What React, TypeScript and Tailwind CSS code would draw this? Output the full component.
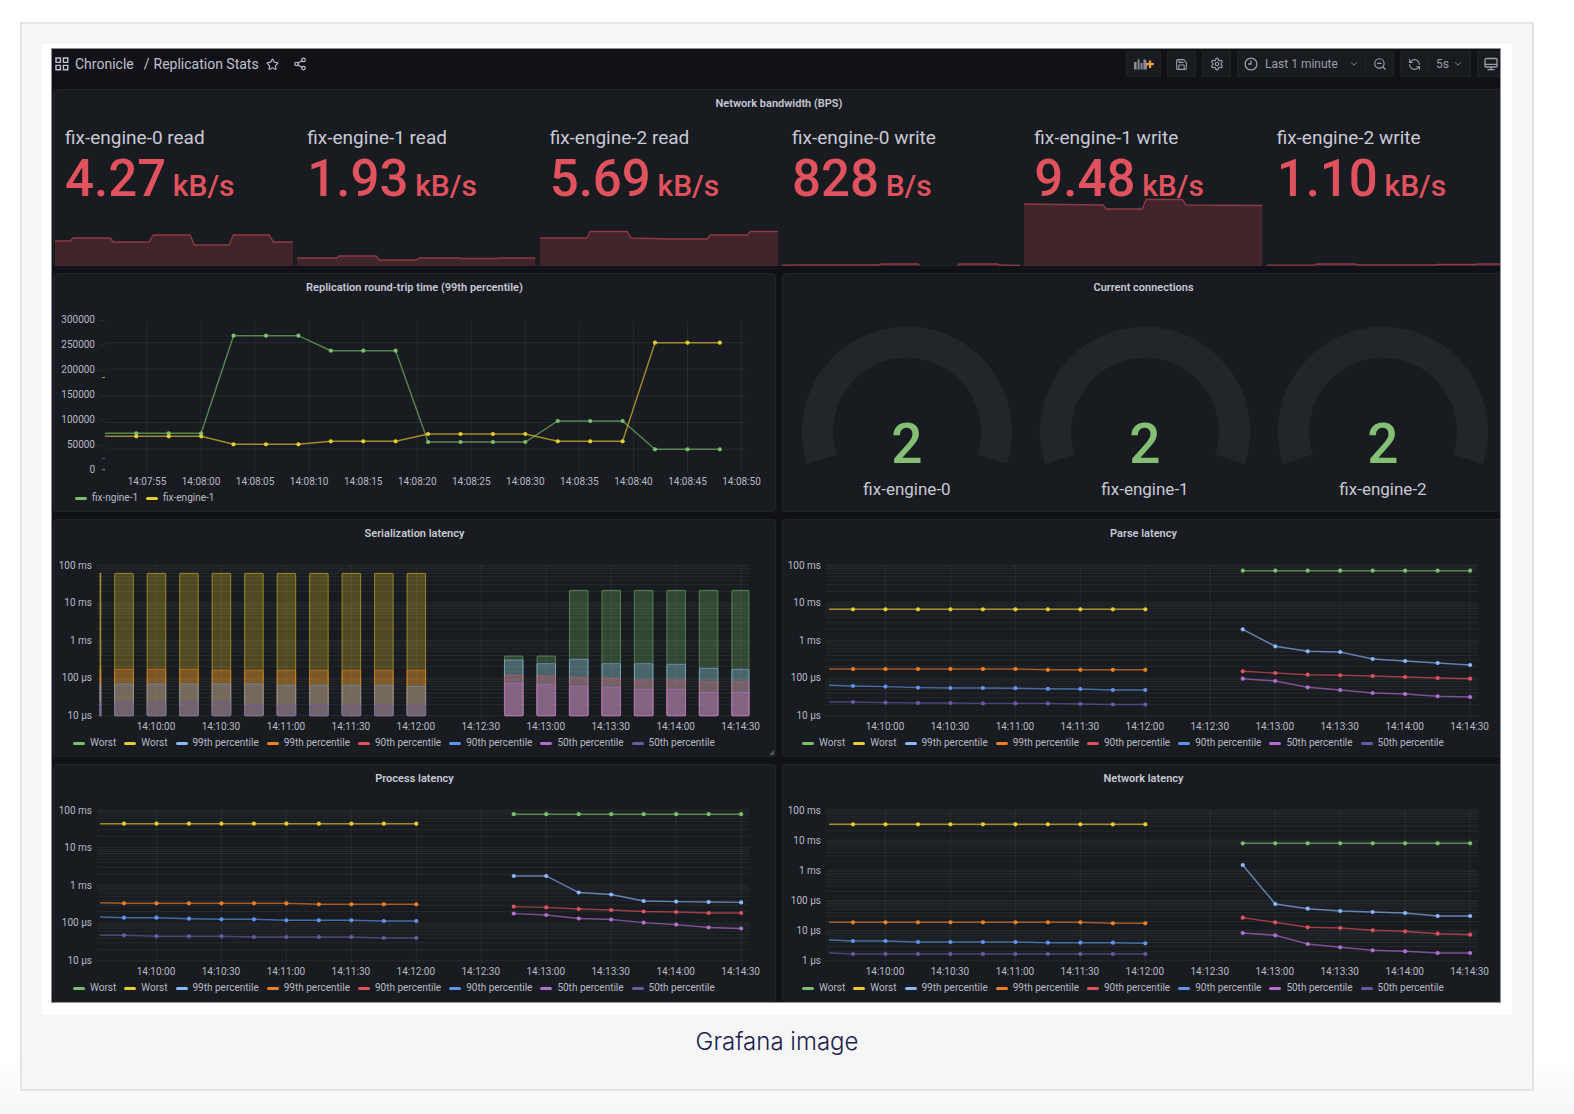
import type { ReactNode } from 'react'
import { ChevronDown, RefreshCcw, Save, Settings, Share2, Star, ZoomOut } from 'lucide-react'

const GREEN = '#7abf6d'
const YELLOW = '#e8cb30'
const LIGHT_BLUE = '#8ab8ff'
const ORANGE = '#f07f25'
const RED = '#e0525e'
const BLUE = '#5f95ee'
const PURPLE = '#b06fd0'
const DARK_PURPLE = '#6a5aa5'

const GRID = 'rgba(204,212,220,0.08)'

type Series = { color: string; side: 'left' | 'right'; ys: number[] }
type Point = [number, number]

const fill = (y: number, n: number) => Array.from({ length: n }, () => y)

// Sparkline vertices inside a 238x68 tile
const stats: { name: string; value: string; unit: string; line: Point[] }[] = [
  {
    name: 'fix-engine-0 read',
    value: '4.27',
    unit: 'kB/s',
    line: [[0, 43], [15, 43], [18, 40], [55, 40], [58, 44], [94, 44], [98, 37], [135, 37], [139, 47], [174, 47], [178, 37], [214, 37], [218, 44], [238, 44]],
  },
  {
    name: 'fix-engine-1 read',
    value: '1.93',
    unit: 'kB/s',
    line: [[0, 60], [40, 60], [42, 58], [79, 58], [82, 62], [119, 62], [122, 60], [162, 60], [164, 60.5], [200, 60.5], [202, 60], [238, 60]],
  },
  {
    name: 'fix-engine-2 read',
    value: '5.69',
    unit: 'kB/s',
    line: [[0, 40], [47, 40], [50, 33.5], [87, 33.5], [91, 40], [128, 41], [167, 41], [170, 37], [207, 37], [210, 33.5], [238, 33.5]],
  },
  {
    name: 'fix-engine-0 write',
    value: '828',
    unit: 'B/s',
    line: [[0, 67.2], [15, 67], [97, 67], [99, 66], [136, 66], [138, 69], [174, 69], [177, 66], [215, 66], [217, 67], [238, 67.4]],
  },
  {
    name: 'fix-engine-1 write',
    value: '9.48',
    unit: 'kB/s',
    line: [[0, 6], [39, 6.5], [79, 7], [82, 11], [118, 11], [122, 1.5], [158, 1.5], [162, 7], [238, 7.5]],
  },
  {
    name: 'fix-engine-2 write',
    value: '1.10',
    unit: 'kB/s',
    line: [[0, 67.2], [47, 67.2], [50, 66], [88, 66], [90, 67], [168, 67], [170, 66.5], [208, 66.5], [211, 66], [238, 66]],
  },
]

const percentileLegend = [
  { label: 'Worst', color: GREEN },
  { label: 'Worst', color: YELLOW },
  { label: '99th percentile', color: LIGHT_BLUE },
  { label: '99th percentile', color: ORANGE },
  { label: '90th percentile', color: RED },
  { label: '90th percentile', color: BLUE },
  { label: '50th percentile', color: PURPLE },
  { label: '50th percentile', color: DARK_PURPLE },
]

const latencyTimes = [
  '14:10:00', '14:10:30', '14:11:00', '14:11:30', '14:12:00',
  '14:12:30', '14:13:00', '14:13:30', '14:14:00', '14:14:30',
]

// All y values below are offsets from the top of the plot area
const serialization: Series[] = [
  { color: YELLOW, side: 'left', ys: fill(8.3, 11) },
  { color: ORANGE, side: 'left', ys: [...fill(104.3, 4), ...fill(105.3, 7)] },
  { color: BLUE, side: 'left', ys: [...fill(119, 6), ...fill(120.3, 4), 121.3] },
  { color: DARK_PURPLE, side: 'left', ys: [...fill(137.5, 5), ...fill(139.3, 6)] },
  { color: GREEN, side: 'right', ys: [91, 91, ...fill(25.3, 6)] },
  { color: LIGHT_BLUE, side: 'right', ys: [95, 98.7, 94.3, 98.7, 98.7, 99.3, 103.3, 104.3] },
  { color: RED, side: 'right', ys: [110.3, 111, 112.3, 113.3, 115, 115, 116.7, 116.7] },
  { color: PURPLE, side: 'right', ys: [118.3, 119.3, 121.3, 122.3, 124.3, 124.3, 127.3, 127.3] },
]

const parse: Series[] = [
  { color: YELLOW, side: 'left', ys: fill(44.3, 11) },
  { color: ORANGE, side: 'left', ys: [...fill(104, 7), ...fill(104.8, 4)] },
  { color: BLUE, side: 'left', ys: [120.3, 121, 121.6, 122.6, 123, 123, 123.2, 123.8, 124, 125, 125] },
  { color: DARK_PURPLE, side: 'left', ys: [137, 137, 137.6, 138, 138, 138.4, 138.4, 138.4, 139, 139.5, 139.5] },
  { color: GREEN, side: 'right', ys: fill(5.7, 8) },
  { color: LIGHT_BLUE, side: 'right', ys: [64.3, 81.3, 86.3, 87, 94, 96, 98, 100] },
  { color: RED, side: 'right', ys: [106.3, 108, 109.7, 110.3, 111, 112, 113, 113.7] },
  { color: PURPLE, side: 'right', ys: [113.7, 116, 122.3, 125, 128, 129, 131.3, 132] },
]

const processing: Series[] = [
  { color: YELLOW, side: 'left', ys: fill(13.7, 11) },
  { color: ORANGE, side: 'left', ys: [92.8, ...fill(93.3, 6), ...fill(94.3, 4)] },
  { color: BLUE, side: 'left', ys: [107, 107.7, 107.7, 108.7, 109.3, 109.3, 110.3, 110.3, 110.3, 111, 111] },
  { color: DARK_PURPLE, side: 'left', ys: [125.3, 125.3, 126.3, 126.3, 126.3, 127, 127, 127, 127, 128, 128] },
  { color: GREEN, side: 'right', ys: fill(4.2, 8) },
  { color: LIGHT_BLUE, side: 'right', ys: [66, 66, 82.5, 84.5, 91, 91.6, 92, 92.4] },
  { color: RED, side: 'right', ys: [96.6, 97.4, 99, 100, 101.5, 102, 103, 103] },
  { color: PURPLE, side: 'right', ys: [103.6, 105, 108.5, 109.5, 112.6, 114.6, 117.5, 118.5] },
]

const network: Series[] = [
  { color: YELLOW, side: 'left', ys: fill(14.3, 11) },
  { color: ORANGE, side: 'left', ys: [...fill(112.3, 9), 113.3, 113.3] },
  { color: BLUE, side: 'left', ys: [130, 131, 131, 132, 132, 132, 132, 132.7, 132.7, 132.7, 133.3] },
  { color: DARK_PURPLE, side: 'left', ys: [143, ...fill(144, 10)] },
  { color: GREEN, side: 'right', ys: fill(33.3, 8) },
  { color: LIGHT_BLUE, side: 'right', ys: [55, 94, 98.7, 101, 102, 103, 106, 106] },
  { color: RED, side: 'right', ys: [107.7, 112.3, 117.3, 118, 120.3, 121.3, 123.7, 124.7] },
  { color: PURPLE, side: 'right', ys: [123, 125.3, 134, 137.3, 140.3, 141.3, 143, 143] },
]

const roundTripTimes = [
  '14:07:55', '14:08:00', '14:08:05', '14:08:10', '14:08:15', '14:08:20',
  '14:08:25', '14:08:30', '14:08:35', '14:08:40', '14:08:45', '14:08:50',
]
const roundTrip = [
  { color: GREEN, ys: [...fill(132.3, 4), ...fill(34.7, 3), ...fill(49.7, 3), ...fill(141, 4), ...fill(120, 3), ...fill(148.3, 3)] },
  { color: YELLOW, ys: [...fill(135.3, 4), ...fill(143.3, 3), ...fill(140.3, 3), ...fill(133, 4), ...fill(140.3, 3), ...fill(41.7, 3)] },
]

function Panel({ title, resizable = false, children }: { title: string; resizable?: boolean; children: ReactNode }) {
  return (
    <section className="relative flex flex-col rounded-sm bg-[#181b1f] inset-ring inset-ring-[#202327]">
      <h2 className="h-7 text-center text-[11px] leading-[30px] font-semibold text-[#c8c9d6]">{title}</h2>
      {children}
      {resizable && (
        <svg viewBox="0 0 5 5" className="absolute right-[2px] bottom-[2px] size-[5px]">
          <path d="M5 0v5H0z" fill="#55575d" />
        </svg>
      )}
    </section>
  )
}

function Legend({ items }: { items: { label: string; color: string }[] }) {
  return (
    <ul className="flex h-3 items-center gap-2 overflow-hidden pr-4 pl-5 text-[10px] leading-3 whitespace-nowrap text-[#b9bac6]">
      {items.map((item, i) => (
        <li key={i} className="flex items-center gap-[5px]">
          <span className="h-[3px] w-3 rounded-sm" style={{ backgroundColor: item.color }} />
          {item.label}
        </li>
      ))}
    </ul>
  )
}

function AxisText({ x, y, anchor, children }: { x: number; y: number; anchor: 'middle' | 'end'; children: ReactNode }) {
  return (
    <text x={x} y={y} textAnchor={anchor} className="fill-[#b9bac6] text-[10px]">
      {children}
    </text>
  )
}

function LineSeries({ points, color }: { points: Point[]; color: string }) {
  return (
    <g>
      <polyline points={points.map((p) => p.join(',')).join(' ')} fill="none" stroke={color} strokeOpacity={0.65} strokeWidth={1.4} />
      {points.slice(points[0][0] < 53 ? 1 : 0).map(([x, y]) => (
        <circle key={x} cx={x} cy={y} r={2.1} fill={color} />
      ))}
    </g>
  )
}

/** Log-scale chart. Samples sit 32.48 units apart; the right-hand run starts at slot 12. */
function LatencyChart({ labels, series, bars = false }: { labels: string[]; series: Series[]; bars?: boolean }) {
  const top = 18
  const bottom = top + 150.7
  const decades = labels.length - 1
  const decade = 150.7 / decades
  const slot = (k: number) => 71 + 32.48 * k

  const gridYs: number[] = [bottom]
  for (let d = 0; d < decades; d++) {
    for (let n = 2; n <= 10; n++) gridYs.push(bottom - decade * (d + Math.log10(n)))
  }

  return (
    <svg viewBox="0 0 723 190" className="block w-full">
      {gridYs.map((y) => (
        <line key={y} x1={44} x2={696} y1={y} y2={y} stroke={GRID} />
      ))}
      {latencyTimes.map((t, i) => (
        <g key={t}>
          <line x1={103.4 + 64.96 * i} x2={103.4 + 64.96 * i} y1={top} y2={bottom + 3} stroke={GRID} />
          <AxisText x={103 + 64.96 * i} y={183} anchor="middle">{t}</AxisText>
        </g>
      ))}
      {labels.map((l, i) => (
        <AxisText key={l} x={39} y={top + 4 + 37.4 * 4 * (i / decades)} anchor="end">{l}</AxisText>
      ))}
      {series.map((s, i) => {
        const first = s.side === 'left' ? -1 : 12
        if (!bars) {
          const points = s.ys.map((y, k): Point => [Math.max(47, slot(first + k)), top + y])
          return <LineSeries key={i} points={points} color={s.color} />
        }
        return s.ys.map((y, k) => {
          const left = Math.max(47, slot(first + k) - 9.3)
          const right = Math.min(696, slot(first + k) + 9.3)
          return (
            <rect
              key={`${i}-${k}`}
              x={left}
              y={top + y}
              width={right - left}
              height={bottom - top - y}
              rx={right - left > 4 ? 0.8 : 0}
              fill={s.color}
              fillOpacity={0.27}
              stroke={s.color}
              strokeOpacity={0.55}
            />
          )
        })
      })}
    </svg>
  )
}

function RoundTripChart() {
  return (
    <svg viewBox="0 0 723 191" className="block w-full">
      {[41.7, 68.3, 95, 121.5, 148.3].map((y) => (
        <line key={y} x1={52} x2={693} y1={y} y2={y} stroke={GRID} />
      ))}
      {roundTripTimes.map((t, i) => (
        <g key={t}>
          <line x1={94 + 54.05 * i} x2={94 + 54.05 * i} y1={20} y2={172} stroke={GRID} />
          <AxisText x={94 + 54.05 * i} y={184} anchor="middle">{t}</AxisText>
        </g>
      ))}
      {[300000, 250000, 200000, 150000, 100000, 50000, 0].map((v, i) => (
        <g key={v}>
          <line x1={46} x2={52} y1={19.5 + 25 * i} y2={19.5 + 25 * i} stroke={GRID} />
          <AxisText x={42} y={22 + 25 * i} anchor="end">{v}</AxisText>
        </g>
      ))}
      <line x1={49} x2={52} y1={76.5} y2={76.5} stroke={YELLOW} strokeOpacity={0.7} />
      <line x1={49} x2={52} y1={157.5} y2={157.5} stroke={BLUE} strokeOpacity={0.5} />
      <line x1={49} x2={52} y1={168.5} y2={168.5} stroke={GREEN} strokeOpacity={0.7} />
      {roundTrip.map((s) => (
        <LineSeries
          key={s.color}
          color={s.color}
          points={s.ys.map((y, k): Point => [k === 0 ? 52 : 83.3 + 32.42 * (k - 1), y])}
        />
      ))}
    </svg>
  )
}

function Gauge({ label, value }: { label: string; value: number }) {
  return (
    <svg viewBox="0 0 238 211" className="block w-full">
      <path d="M18.8 163.2A105.3 105.3 0 1 1 219.2 163.2L189.2 153.4A73.8 73.8 0 1 0 48.8 153.4Z" fill="#222529" />
      <text x={119} y={162} textAnchor="middle" className="fill-[#85bf75] text-[55px] font-medium">{value}</text>
      <text x={119} y={194} textAnchor="middle" className="fill-[#c8c9d6] text-[17px]">{label}</text>
    </svg>
  )
}

function ToolButton({ label, className = '', children }: { label: string; className?: string; children: ReactNode }) {
  return (
    <button type="button" aria-label={label} className={`flex h-[26px] items-center justify-center border border-[#202226] bg-[#181b1f] ${className}`}>
      {children}
    </button>
  )
}

function Toolbar() {
  return (
    <header className="flex h-10 items-start justify-between pt-[2px] text-[#9d9ea8]">
      <nav className="flex h-[26px] items-center pl-[2px] text-sm text-[#c0c1cd]">
        <svg viewBox="0 0 14 14" className="mr-[6px] size-[14px]" fill="none" stroke="currentColor" strokeWidth={1.4}>
          <path d="M1 1h4.4v4.4H1zM8.4 1h4.4v4.4H8.4zM1 8.4h4.4v4.4H1zM8.4 8.4h4.4v4.4H8.4z" />
        </svg>
        <a href="#chronicle">Chronicle</a>
        <span className="mr-1 ml-2.5">/</span>
        <a href="#replication-stats">Replication Stats</a>
        <button type="button" aria-label="Mark as favorite" className="ml-[7px]"><Star size={13} /></button>
        <button type="button" aria-label="Share dashboard" className="ml-[14px]"><Share2 size={14} /></button>
      </nav>
      <div className="flex gap-1.5">
        <ToolButton label="Add panel" className="w-[35px]">
          <svg viewBox="0 0 20 14" className="h-[14px] w-5" fill="#8a8b95">
            <path d="M0 5h2.6v7.5H0zM3.6 2.5h2v10h-2zM6.6 6h2v6.5h-2zM9.4 2.5h2.4l1.2 5v5H9.4z" />
            <path d="M15 3.5h2.2v2.6h2.6v2.2h-2.6v2.6H15V8.3h-2.6V6.1H15z" fill="#f0a03c" />
          </svg>
        </ToolButton>
        <ToolButton label="Save dashboard" className="w-[29px]"><Save size={13} /></ToolButton>
        <ToolButton label="Dashboard settings" className="w-[29px]"><Settings size={14} /></ToolButton>
        <div className="flex">
          <ToolButton label="Time range" className="w-[129px] gap-[7px] text-xs">
            <svg viewBox="0 0 14 14" className="size-[14px]" fill="none" stroke="currentColor" strokeWidth={1.3} strokeLinecap="round">
              <circle cx={7} cy={7} r={5.9} />
              <path d="M7 3.8V7H4.6" />
            </svg>
            Last 1 minute
            <ChevronDown size={10} className="ml-1" />
          </ToolButton>
          <ToolButton label="Zoom out time range" className="-ml-px w-[29px]"><ZoomOut size={14} /></ToolButton>
        </div>
        <div className="flex">
          <ToolButton label="Refresh dashboard" className="w-[29px]"><RefreshCcw size={13} /></ToolButton>
          <ToolButton label="Refresh interval" className="-ml-px w-[43px] gap-1 text-xs">
            5s
            <ChevronDown size={10} />
          </ToolButton>
        </div>
        <ToolButton label="Cycle view mode" className="w-7">
          <svg viewBox="0 0 14 14" className="size-[14px]" fill="none" stroke="currentColor" strokeWidth={1.3} strokeLinecap="round">
            <rect x={1} y={1.5} width={12} height={8.5} rx={1.2} />
            <path d="M1 7.3h12M7 10v2.5M4 12.7h6" />
          </svg>
        </ToolButton>
      </div>
    </header>
  )
}

function StatTile({ name, value, unit, line }: (typeof stats)[number]) {
  const points = line.map((p) => p.join(',')).join(' ')
  return (
    <div className="flex flex-col pt-[7px]">
      <div className="pl-2.5 text-[19px] leading-7 text-[#c8c9d6]">{name}</div>
      <div className="pl-2.5 text-[51px] leading-[54px] font-medium whitespace-nowrap text-[#e0525e]">
        {value} <span className="-ml-1.5 text-[30px] leading-none">{unit}</span>
      </div>
      <svg viewBox="0 0 238 68" preserveAspectRatio="none" className="-mt-2 block h-[68px] w-full">
        <polygon points={`0,68 ${points} 238,68`} fill="#41252b" />
        <polyline points={points} fill="none" stroke="#8f3a45" strokeWidth={1.3} />
      </svg>
    </div>
  )
}

export default function App() {
  return (
    <main className="min-h-screen bg-linear-to-b from-white from-95% to-[#f6f6f6] pt-[22px] pr-10 pb-[23px] pl-5">
      <figure className="border-2 border-[#e4e4e4] bg-[#f6f6f6] p-5">
        <div className="bg-white pt-1 pr-[11px] pb-3 pl-[9px]">
          <div className="overflow-hidden border border-[#8f9093] bg-[#111217] font-['Roboto',sans-serif]">
            <div className="-mr-[5px] ml-px">
              <Toolbar />
              <div className="flex flex-col gap-[7px]">
                <Panel title="Network bandwidth (BPS)">
                  <div className="grid grid-cols-6 gap-1 pl-[2px]">
                    {stats.map((s) => (
                      <StatTile key={s.name} {...s} />
                    ))}
                  </div>
                </Panel>
                <div className="grid grid-cols-2 gap-x-1.5 gap-y-[7px]">
                  <Panel title="Replication round-trip time (99th percentile)">
                    <RoundTripChart />
                    <div className="pl-[2px]">
                      <Legend items={[{ label: 'fix-ngine-1', color: GREEN }, { label: 'fix-engine-1', color: YELLOW }]} />
                    </div>
                  </Panel>
                  <Panel title="Current connections">
                    <div className="grid grid-cols-3 pr-[3px] pl-1.5">
                      <Gauge label="fix-engine-0" value={2} />
                      <Gauge label="fix-engine-1" value={2} />
                      <Gauge label="fix-engine-2" value={2} />
                    </div>
                  </Panel>
                  <Panel title="Serialization latency" resizable>
                    <LatencyChart bars labels={['100 ms', '10 ms', '1 ms', '100 µs', '10 µs']} series={serialization} />
                    <div className="pb-2"><Legend items={percentileLegend} /></div>
                  </Panel>
                  <Panel title="Parse latency">
                    <LatencyChart labels={['100 ms', '10 ms', '1 ms', '100 µs', '10 µs']} series={parse} />
                    <div className="pb-2"><Legend items={percentileLegend} /></div>
                  </Panel>
                  <Panel title="Process latency">
                    <LatencyChart labels={['100 ms', '10 ms', '1 ms', '100 µs', '10 µs']} series={processing} />
                    <div className="pb-2"><Legend items={percentileLegend} /></div>
                  </Panel>
                  <Panel title="Network latency">
                    <LatencyChart labels={['100 ms', '10 ms', '1 ms', '100 µs', '10 µs', '1 µs']} series={network} />
                    <div className="pb-2"><Legend items={percentileLegend} /></div>
                  </Panel>
                </div>
              </div>
            </div>
          </div>
        </div>
        <figcaption className="h-[54px] text-center font-['Inter',sans-serif] text-2xl leading-[54px] font-light text-[#1b1d4e]">
          Grafana image
        </figcaption>
      </figure>
    </main>
  )
}
